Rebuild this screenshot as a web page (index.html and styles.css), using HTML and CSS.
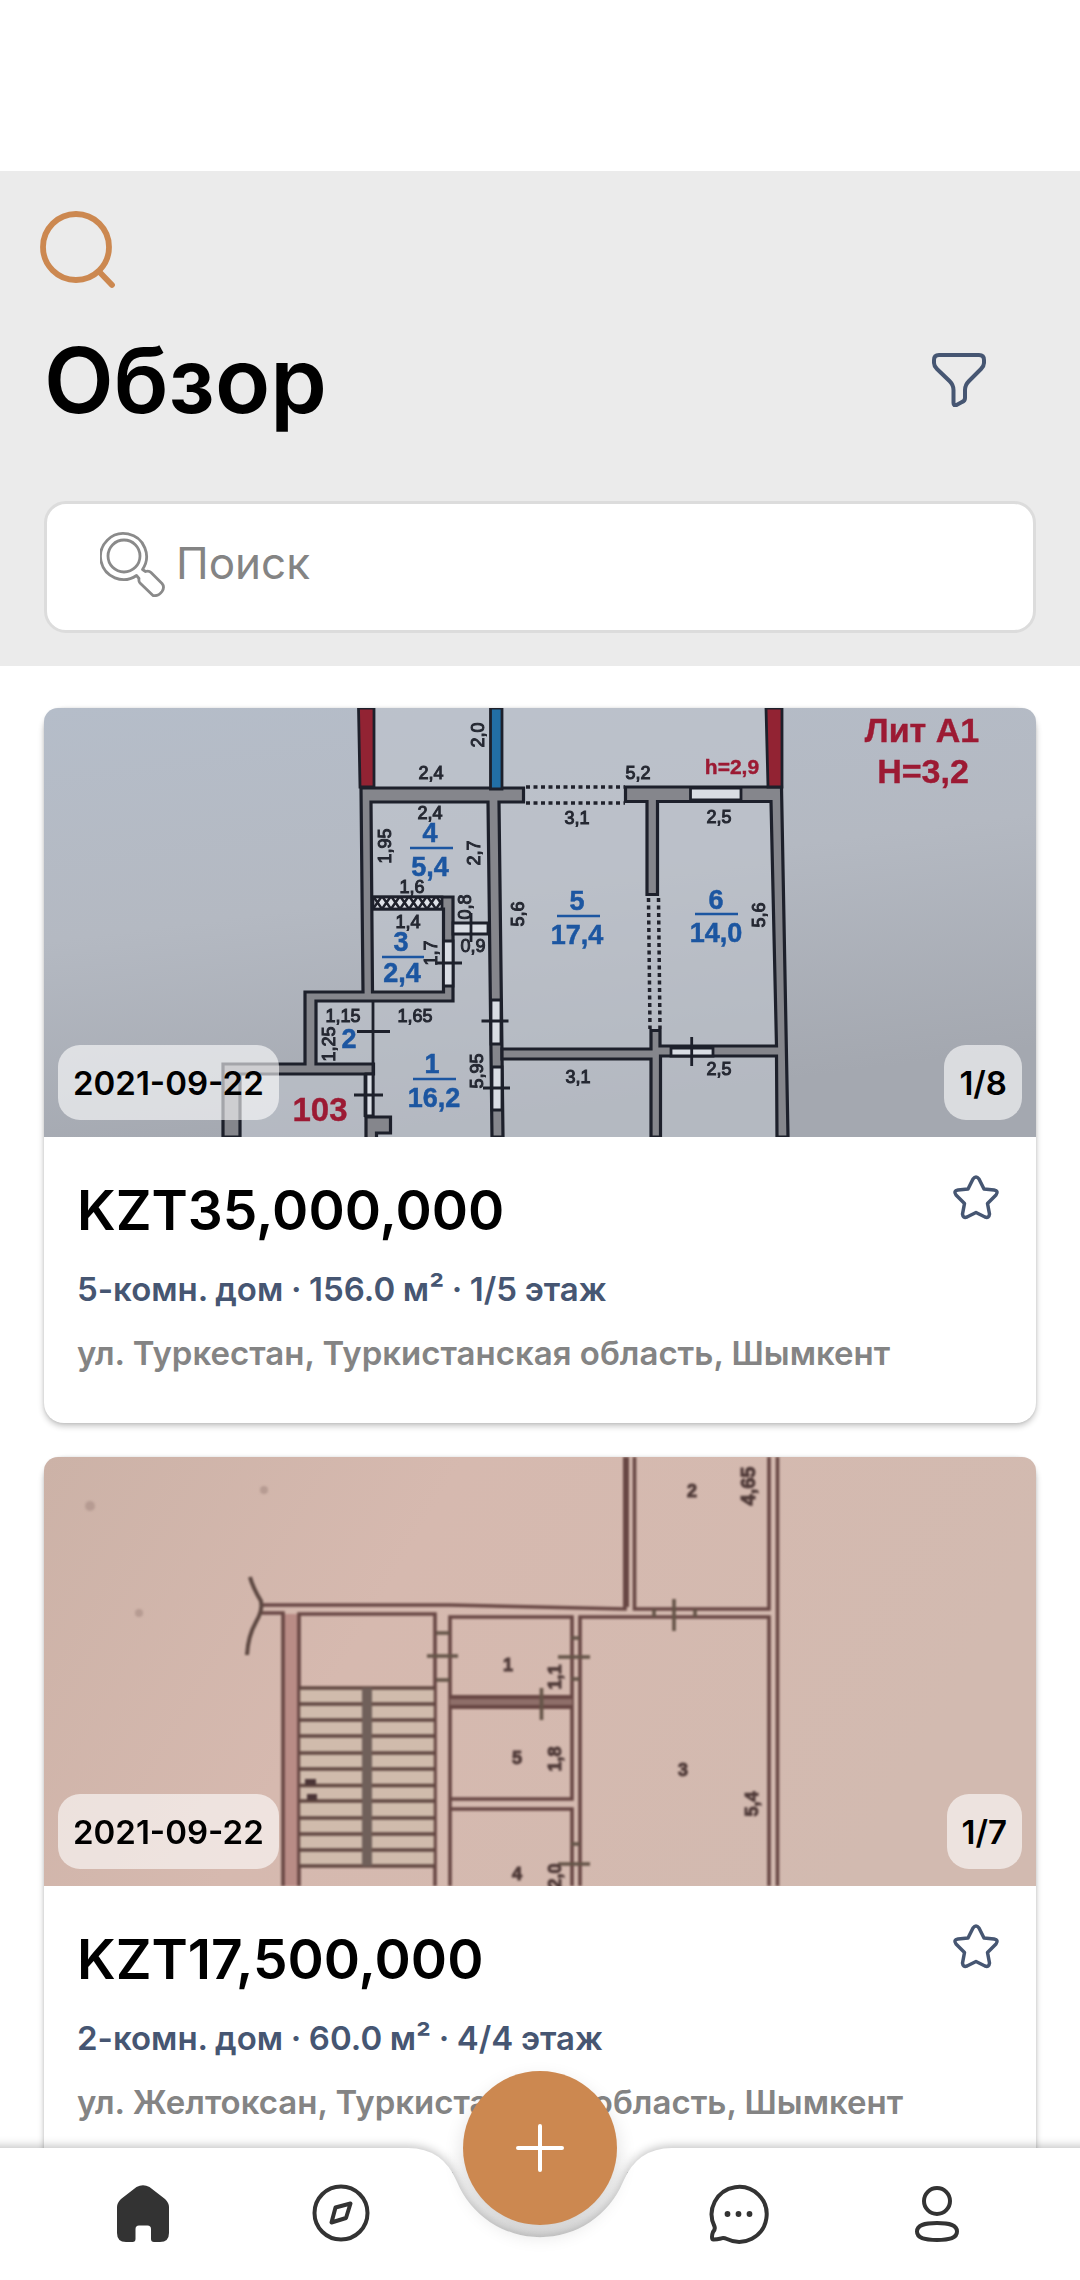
FILE: index.html
```html
<!DOCTYPE html>
<html lang="ru">
<head>
<meta charset="utf-8">
<title>Обзор</title>
<link rel="stylesheet" href="styles.css">
</head>
<body>
<div class="screen">
  <header class="header">
    <svg class="brand" viewBox="0 0 80 84" fill="none" stroke="#cc8850" stroke-width="5.8" stroke-linecap="round"><circle cx="39" cy="41" r="33"/><path d="M62.5 66 75 79"/></svg>
    <div class="title-row">
      <h1 class="title">Обзор</h1>
      <svg class="filter" viewBox="0 0 54 54" fill="none" stroke="#465672" stroke-width="4" stroke-linejoin="round"><path d="M7 2H47Q52 2 52 7V10Q52 13 49 16L37 28Q33 32 33 37V45Q33 48 30 49L24.500 52Q21.500 53 21.500 50V37Q21.500 32 17.500 28L5 16Q2 13 2 10V7Q2 2 7 2Z"/></svg>
    </div>
    <div class="search">
      <svg class="search-icon" viewBox="0 0 65 65" fill="none" stroke="#8a8a8a" stroke-width="2.800" stroke-linejoin="round"><circle cx="24" cy="24" r="16"/><path d="M36.500 43.500A23 23 0 1 1 42.500 37.500L45.500 39.500Q49 38.500 51 40.500L62 51.500Q65 55 62 59.500Q58.500 64.500 53 63.500L40 51Q38.500 49.500 39 46.500Z"/></svg>
      <span class="search-text">Поиск</span>
    </div>
  </header>

  <main class="list">
    <article class="card">
      <div class="photo">
        <svg class="plan" viewBox="44 708 992 429">
          <defs>
            <linearGradient id="paper" x1="0" y1="0" x2=".3" y2="1"><stop offset="0" stop-color="#b5bdc9"/><stop offset=".5" stop-color="#b4b9c2"/><stop offset="1" stop-color="#a4a8b0"/></linearGradient>
            <pattern id="hatch" width="9" height="13" patternUnits="userSpaceOnUse" x="373" y="896"><rect width="9" height="13" fill="#dfe2e8"/><path d="M0 0 9 13M9 0 0 13" stroke="#20222c" stroke-width="2.500"/></pattern>
          </defs>
          <rect x="44" y="708" width="992" height="429" fill="url(#paper)"/>
          <path d="M360 708H782L788 1137H223V1069H310V996H366Z" fill="#c0c5cd" opacity=".6"/>
          <g class="soft">
            <g fill="#85868c" stroke="#1d202b" stroke-width="3.200">
              <path d="M361 788H523.500V802H499L503 1137H492L488 802H371L372.500 992H443.500V909H373V897H453V1001H316V1064H373.500V1074H240V1137H223V1064H305V992H363Z"/>
              <path d="M625.500 787H781.500L788 1137H777L776.500 1056H660.500V1137H651V1059H502V1049H651V1030.500H660V1046H776.500L771 801.500H657.500V894.500H647V801.500H625.500Z"/>
              <path d="M366 1117H390.500V1133H376.500V1140H366Z"/>
            </g>
            <g fill="none" stroke="#1d202b" stroke-width="2.800"><path d="M373 1002V1117M365 1074V1117"/></g>
            <g stroke="#1d202b" stroke-width="2.800">
              <path d="M358.500 708H374V787H360Z" fill="#922333"/><path d="M766 708H782V787H768Z" fill="#922333"/><path d="M490.500 708H502V789H490.500Z" fill="#226fa6"/>
              <g fill="#d9dde4"><path d="M690.500 788H741V800H690.500ZM443.500 941H453V986H443.500ZM453 923H488V934H453ZM491 1000H501V1044H491ZM492 1067H502V1110H492ZM671 1048H713V1056H671ZM366 1074H373V1116H366Z"/></g>
              <rect x="373" y="897" width="69" height="12" fill="url(#hatch)"/>
            </g>
            <path d="M435 963H462M471 913V942M481.500 1021H508.500M483 1088H510M354 1095H383M357 1031.500H390M691.700 1037V1066" stroke="#1d202b" stroke-width="2.800"/>
            <path d="M526 787H625M526 803H625M648.500 898 650 1029M658.500 898 660 1029" stroke="#20222c" stroke-width="3.500" stroke-dasharray="4 3.500" fill="none"/>
            <g class="dim" fill="#252832">
              <text x="431" y="779">2,4</text><text x="430" y="819">2,4</text><text x="412" y="893">1,6</text><text x="408" y="928">1,4</text><text x="343" y="1022">1,15</text><text x="415" y="1022">1,65</text><text x="473" y="952">0,9</text>
              <text x="638" y="779">5,2</text><text x="577" y="824">3,1</text><text x="719" y="823">2,5</text><text x="578" y="1083">3,1</text><text x="719" y="1075">2,5</text>
              <text transform="translate(484 735) rotate(-90)">2,0</text><text transform="translate(391 846) rotate(-90)">1,95</text><text transform="translate(480 853) rotate(-90)">2,7</text><text transform="translate(471 907) rotate(-90)">0,8</text><text transform="translate(437 953) rotate(-90)">1,7</text><text transform="translate(524 914) rotate(-90)">5,6</text><text transform="translate(765 915) rotate(-90)">5,6</text><text transform="translate(335 1044) rotate(-90)">1,25</text><text transform="translate(483 1071) rotate(-90)">5,95</text>
            </g>
            <g class="room" fill="#1c56a1">
              <text x="430" y="842">4</text><text x="430" y="876">5,4</text><text x="401" y="951">3</text><text x="402" y="982">2,4</text><text x="349" y="1048">2</text><text x="432" y="1073">1</text><text x="434" y="1107">16,2</text><text x="577" y="910">5</text><text x="577" y="944">17,4</text><text x="716" y="909">6</text><text x="716" y="942">14,0</text>
            </g>
            <path d="M410 848H453M382 957H424M413 1079H456M557 916H600M695 914H738" stroke="#1c56a1" stroke-width="2.500"/>
            <g class="red" fill="#9c1a33"><text x="320" y="1121" font-size="33">103</text><text x="732" y="774" font-size="21">h=2,9</text><text x="922" y="742" font-size="34">Лит А1</text><text x="923" y="783" font-size="34">H=3,2</text></g>
          </g>
        </svg>
        <span class="chip">2021-09-22</span><span class="chip">1/8</span>
      </div>
      <div class="info">
        <div class="copy">
          <h2 class="price">KZT35,000,000</h2>
          <p class="facts">5-комн. дом · 156.0 м² · 1/5 этаж</p>
          <p class="address">ул. Туркестан, Туркистанская область, Шымкент</p>
        </div>
        <svg class="star" viewBox="0 0 46 44"><path d="M20 4Q23 0 26 4L31 14L41 15Q46 16 43 20L34.500 28.500L36.500 39Q36 43.500 32 42L23 37.500L14 42Q10 43.500 9.500 39L11.500 28.500L3 20Q0 16 5 15L15 14Z"/></svg>
      </div>
    </article>

    <article class="card">
      <div class="photo">
        <svg class="plan" viewBox="44 1457 992 429">
          <defs><linearGradient id="rose" x1="0" y1="0" x2="1" y2=".25"><stop offset="0" stop-color="#ccb2a7"/><stop offset=".4" stop-color="#d6b9af"/><stop offset="1" stop-color="#d2bab0"/></linearGradient></defs>
          <rect x="44" y="1457" width="992" height="429" fill="url(#rose)"/>
          <g class="faded" fill="none" stroke="#684744" stroke-width="3.600">
            <path d="M283 1614H299V1886H283Z" fill="#b98c86" stroke="none"/>
            <path d="M260 1605H450L625 1609V1457M260 1613H283V1886M299 1886V1614H435V1886M450 1886V1809H572V1886M450 1809V1617H572V1799H450M580 1886V1617H769V1886M634.500 1457V1609H769V1457M777.500 1457V1886"/>
            <path d="M626 1457V1607" stroke-width="6"/>
            <path d="M450 1697H572M450 1707H572" stroke-width="4"/>
            <path d="M450 1702H572" stroke="#8e6e69" stroke-width="6"/>
            <rect x="300" y="1688" width="134" height="178" fill="#cdbcab" stroke="none" opacity=".75"/>
            <path d="M299 1688H435M299 1704H435M299 1720H435M299 1736H435M299 1753H435M299 1769H435M299 1785.500H435M299 1801H435M299 1818H435M299 1834H435M299 1850H435M299 1866H435" stroke="#604640"/>
            <path d="M367 1688V1866" stroke="#70605a" stroke-width="10"/>
            <path d="M305 1782H316M307 1797H317" stroke="#4b3536" stroke-width="6"/>
            <path d="M250 1577Q253 1588 261 1601Q263 1610 256 1622Q248 1636 247 1655" stroke="#5c4741" stroke-width="4"/>
            <path d="M436 1633H450M436 1680H450M427 1656H458M558 1657H590M541.500 1688V1720M558 1864H590M674 1599V1631M654 1609V1617M695 1609V1617M571 1638H580M571 1679H580M571 1844H580" stroke="#655448"/>
            <g fill="#503b39" stroke="none" class="dim old">
              <text x="508" y="1671">1</text><text x="517" y="1764">5</text><text x="517" y="1880">4</text><text x="692" y="1497">2</text><text x="683" y="1776">3</text>
              <text class="tall" transform="translate(755 1486) rotate(-90)">4,65</text><text transform="translate(561 1677) rotate(-90)">1,1</text><text transform="translate(561 1759) rotate(-90)">1,8</text><text transform="translate(758 1804) rotate(-90)">5,4</text><text transform="translate(561 1876) rotate(-90)">2,0</text>
            </g>
            <g fill="#b69b92" stroke="none"><circle cx="90" cy="1506" r="5"/><circle cx="264" cy="1490" r="4"/><circle cx="139" cy="1613" r="4"/></g>
          </g>
        </svg>
        <span class="chip">2021-09-22</span><span class="chip">1/7</span>
      </div>
      <div class="info">
        <div class="copy">
          <h2 class="price">KZT17,500,000</h2>
          <p class="facts">2-комн. дом · 60.0 м² · 4/4 этаж</p>
          <p class="address">ул. Желтоксан, Туркистанская область, Шымкент</p>
        </div>
        <svg class="star" viewBox="0 0 46 44"><path d="M20 4Q23 0 26 4L31 14L41 15Q46 16 43 20L34.500 28.500L36.500 39Q36 43.500 32 42L23 37.500L14 42Q10 43.500 9.500 39L11.500 28.500L3 20Q0 16 5 15L15 14Z"/></svg>
      </div>
    </article>
  </main>

  <nav class="nav">
    <svg class="nav-shape" viewBox="0 -30 1080 162">
      <defs><linearGradient id="well" gradientUnits="userSpaceOnUse" x1="0" y1="0" x2="0" y2="90"><stop offset="0" stop-color="#fff"/><stop offset="1" stop-color="#f0f0f0"/></linearGradient></defs>
      <path d="M443 4Q448 14 457 34A90 90 0 0 0 623 34Q632 14 637 4Z" fill="url(#well)"/>
      <path class="bar" d="M-20 0H408Q443 0 457 34A90 90 0 0 0 623 34Q637 0 672 0H1100V142H-20Z"/>
    </svg>
    <svg class="tab" viewBox="0 0 60 60"><path d="M23.500 4Q30 .500 36.500 4L52 16Q56 20 56 24V50Q56 59 47 59H41Q38 59 38 56V46Q38 42.500 34.500 42.500H26Q22.500 42.500 22.500 46V56Q22.500 59 19.500 59H13Q4 59 4 50V24Q4 20 8 16Z" fill="#333"/></svg>
    <svg class="tab line" viewBox="0 0 60 60"><circle cx="30" cy="30" r="26.500"/><path d="M24.500 24.500 39.500 20.500 35 35 20.500 39.500Z"/></svg>
    <button class="fab" aria-label="Добавить"><svg class="plus" viewBox="0 0 48 48"><path d="M2 24H46M24 2V46"/></svg></button>
    <svg class="tab line" viewBox="0 0 60 60"><path d="M5.500 43.500A27.500 27.500 0 1 1 18 56Q14.500 54.500 12 55.500Q8 56.500 4.500 56.500Q3 56.500 3 54Q3 51.500 4 49Q6.500 46.500 5.500 43.500Z"/><g fill="#333" stroke="none"><circle cx="18.500" cy="31" r="2.900"/><circle cx="29.500" cy="31" r="2.900"/><circle cx="40.500" cy="31" r="2.900"/></g></svg>
    <svg class="tab line" viewBox="0 0 60 60"><circle cx="30" cy="18" r="13"/><path d="M30 40C43 40 50 42 50 48.500S43 57 30 57S10 55 10 48.500S17 40 30 40Z"/></svg>
  </nav>
</div>
</body>
</html>
```
FILE: styles.css
```css
* { box-sizing: border-box; }
body { margin: 0; background: #fff; font-family: Inter, "Noto Sans", sans-serif; }
svg { display: block; }
h1, h2, p { margin: 0; }
.screen { position: relative; width: 1080px; height: 2280px; overflow: hidden; padding-top: 171px; }

.header { height: 495px; padding: 35px 44px 0; background: #ebebeb; }
.brand { width: 80px; height: 84px; margin-left: -7px; }
.title-row { display: flex; align-items: center; justify-content: space-between; height: 112px; margin-top: 36px; padding-right: 50px; }
.title { margin-bottom: 5px; font-size: 90.750px; line-height: 110px; font-weight: 600; color: #000; }
.filter { width: 54px; height: 54px; margin-bottom: 5px; }
.search { display: flex; align-items: center; gap: 11px; height: 132px; margin-top: 63px; padding-left: 53px; border: 3px solid #dcdcdc; border-radius: 22px; background: #fff; }
.search-icon { width: 65px; height: 65px; margin-top: -5px; }
.search-text { margin-top: -8px; font-size: 44px; line-height: 54px; color: #848484; }

.list { display: flex; flex-direction: column; gap: 34px; padding: 42px 44px 0; }
.card { height: 715px; border-radius: 20px; background: #fff; box-shadow: 0 3px 6px rgba(0, 0, 0, .24), 0 0 3px rgba(0, 0, 0, .1); }
.photo { position: relative; display: flex; align-items: flex-end; justify-content: space-between; height: 429px; padding: 0 14px 17px; border-radius: 14px 14px 0 0; overflow: hidden; }
.plan { position: absolute; inset: 0; width: 992px; height: 429px; }
.soft { filter: blur(.7px); }
.faded { filter: blur(1px); }
.plan text { font-family: "Liberation Sans", sans-serif; text-anchor: middle; font-weight: 700; }
.dim text { font-size: 18px; font-weight: 400; stroke: #252832; stroke-width: 1px; }
.old text { stroke: #503b39; font-weight: 700; }
.old .tall { font-size: 20px; }
.room text { font-size: 27px; stroke: #1c56a1; stroke-width: .5px; }
.red text { stroke: #9c1a33; stroke-width: .4px; }
.chip { position: relative; height: 75px; padding: 0 15px; border-radius: 22px; background: rgba(255, 255, 255, .6); font-size: 33px; line-height: 76px; font-weight: 600; color: #000; }

.info { display: flex; justify-content: space-between; padding: 39px 37px 0 33px; }
.copy { display: flex; flex-direction: column; }
.price { font-size: 55px; line-height: 68px; font-weight: 600; color: #000; }
.facts { margin-top: 25px; font-size: 33px; line-height: 40px; font-weight: 600; color: #465672; word-spacing: -.7px; }
.address { margin-top: 24px; font-size: 33px; line-height: 40px; font-weight: 600; color: #848484; white-space: nowrap; }
.star { width: 46px; height: 44px; margin-top: -1px; flex: none; overflow: visible; fill: none; stroke: #465672; stroke-width: 3.5px; stroke-linejoin: round; }

.nav { position: absolute; left: 0; right: 0; bottom: 0; display: flex; align-items: flex-start; height: 132px; padding: 35px 0 0 113px; }
.nav-shape { position: absolute; left: 0; top: -30px; width: 1080px; height: 162px; }
.bar { fill: #fff; filter: drop-shadow(0 -2px 5px rgba(0, 0, 0, .24)); }
.tab { position: relative; width: 60px; height: 60px; overflow: visible; }
.tab + .tab { margin-left: 138px; }
.fab { position: relative; display: grid; place-items: center; width: 154px; height: 154px; margin: -112px 92px 0; padding: 0; border: 0; border-radius: 50%; background: #cc8850; box-shadow: 0 9px 20px rgba(0, 0, 0, .14); }
.plus { width: 48px; height: 48px; fill: none; stroke: #fff; stroke-width: 4px; stroke-linecap: round; }
.line { fill: none; stroke: #333; stroke-width: 4px; stroke-linejoin: round; }
```
